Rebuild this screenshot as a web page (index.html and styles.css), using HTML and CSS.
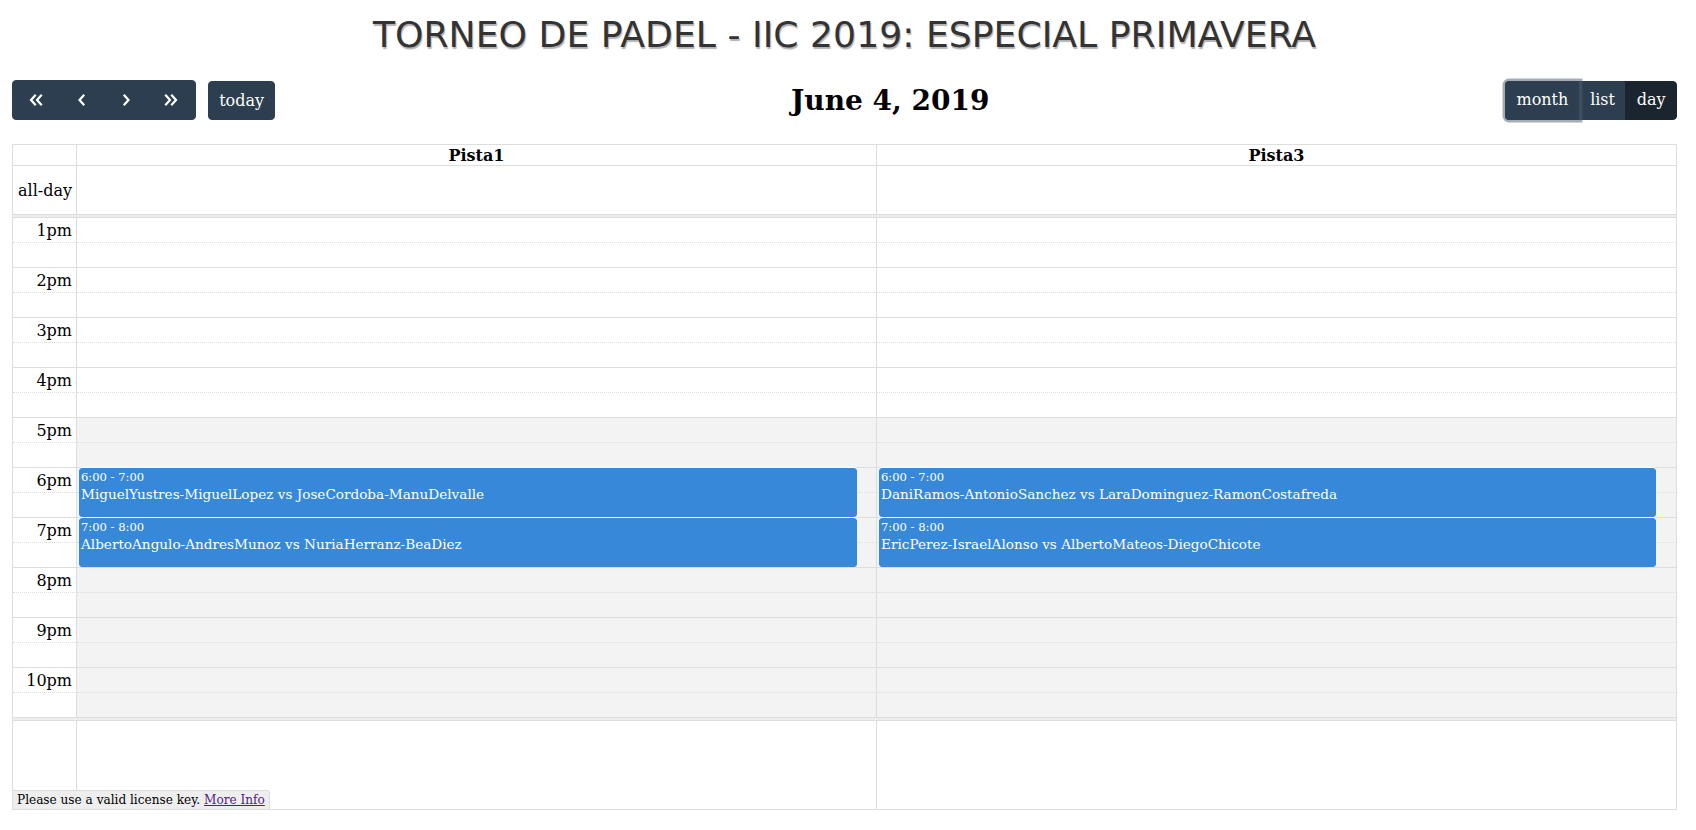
FILE: index.html
```html
<!DOCTYPE html>
<html lang="es">
<head>
<meta charset="utf-8">
<title>Torneo de Padel</title>
<link rel="stylesheet" href="styles.css">
</head>
<body>
<div class="page">
  <h1 class="title">TORNEO DE PADEL - IIC 2019: ESPECIAL PRIMAVERA</h1>

  <div class="toolbar">
    <div class="tb-left">
      <div class="btn-group">
        <button class="btn icon-btn" aria-label="prev year">
          <svg viewBox="0 0 24 24" width="24" height="24"><polyline points="12,7.5 8,12 12,16.5" /><polyline points="18,7.5 14,12 18,16.5" /></svg>
        </button>
        <button class="btn icon-btn" aria-label="prev">
          <svg viewBox="0 0 24 24" width="24" height="24"><polyline points="14.5,7.5 10.5,12 14.5,16.5" /></svg>
        </button>
        <button class="btn icon-btn" aria-label="next">
          <svg viewBox="0 0 24 24" width="24" height="24"><polyline points="9.5,7.5 13.5,12 9.5,16.5" /></svg>
        </button>
        <button class="btn icon-btn" aria-label="next year">
          <svg viewBox="0 0 24 24" width="24" height="24"><polyline points="6,7.5 10,12 6,16.5" /><polyline points="12,7.5 16,12 12,16.5" /></svg>
        </button>
      </div>
      <button class="btn today">today</button>
    </div>
    <h2 class="date">June 4, 2019</h2>
    <div class="btn-group views">
      <button class="btn focus">month</button>
      <button class="btn">list</button>
      <button class="btn active">day</button>
    </div>
  </div>

  <div class="cal">
    <div class="row head">
      <div class="cell axis"></div>
      <div class="cell col">Pista1</div>
      <div class="cell col">Pista3</div>
    </div>
    <div class="row allday">
      <div class="cell axis">all-day</div>
      <div class="cell col"></div>
      <div class="cell col"></div>
    </div>
    <div class="divider"></div>

    <div class="slats">
      <div class="row slot hour"><div class="cell axis">1pm</div><div class="cell col"></div><div class="cell col"></div></div>
      <div class="row slot minor"><div class="cell axis"></div><div class="cell col"></div><div class="cell col"></div></div>
      <div class="row slot hour"><div class="cell axis">2pm</div><div class="cell col"></div><div class="cell col"></div></div>
      <div class="row slot minor"><div class="cell axis"></div><div class="cell col"></div><div class="cell col"></div></div>
      <div class="row slot hour"><div class="cell axis">3pm</div><div class="cell col"></div><div class="cell col"></div></div>
      <div class="row slot minor"><div class="cell axis"></div><div class="cell col"></div><div class="cell col"></div></div>
      <div class="row slot hour"><div class="cell axis">4pm</div><div class="cell col"></div><div class="cell col"></div></div>
      <div class="row slot minor"><div class="cell axis"></div><div class="cell col"></div><div class="cell col"></div></div>
      <div class="row slot hour off"><div class="cell axis">5pm</div><div class="cell col"></div><div class="cell col"></div></div>
      <div class="row slot minor off"><div class="cell axis"></div><div class="cell col"></div><div class="cell col"></div></div>
      <div class="row slot hour off"><div class="cell axis">6pm</div><div class="cell col"></div><div class="cell col"></div></div>
      <div class="row slot minor off"><div class="cell axis"></div><div class="cell col"></div><div class="cell col"></div></div>
      <div class="row slot hour off"><div class="cell axis">7pm</div><div class="cell col"></div><div class="cell col"></div></div>
      <div class="row slot minor off"><div class="cell axis"></div><div class="cell col"></div><div class="cell col"></div></div>
      <div class="row slot hour off"><div class="cell axis">8pm</div><div class="cell col"></div><div class="cell col"></div></div>
      <div class="row slot minor off"><div class="cell axis"></div><div class="cell col"></div><div class="cell col"></div></div>
      <div class="row slot hour off"><div class="cell axis">9pm</div><div class="cell col"></div><div class="cell col"></div></div>
      <div class="row slot minor off"><div class="cell axis"></div><div class="cell col"></div><div class="cell col"></div></div>
      <div class="row slot hour off"><div class="cell axis">10pm</div><div class="cell col"></div><div class="cell col"></div></div>
      <div class="row slot minor off"><div class="cell axis"></div><div class="cell col"></div><div class="cell col"></div></div>

      <div class="events">
        <div class="ev-axis"></div>
        <div class="ev-col">
          <div class="ev" style="top:250px">
            <div class="ev-time">6:00 - 7:00</div>
            <div class="ev-title">MiguelYustres-MiguelLopez vs JoseCordoba-ManuDelvalle</div>
          </div>
          <div class="ev" style="top:300px">
            <div class="ev-time">7:00 - 8:00</div>
            <div class="ev-title">AlbertoAngulo-AndresMunoz vs NuriaHerranz-BeaDiez</div>
          </div>
        </div>
        <div class="ev-col">
          <div class="ev" style="top:250px">
            <div class="ev-time">6:00 - 7:00</div>
            <div class="ev-title">DaniRamos-AntonioSanchez vs LaraDominguez-RamonCostafreda</div>
          </div>
          <div class="ev" style="top:300px">
            <div class="ev-time">7:00 - 8:00</div>
            <div class="ev-title">EricPerez-IsraelAlonso vs AlbertoMateos-DiegoChicote</div>
          </div>
        </div>
      </div>
    </div>

    <div class="divider"></div>
    <div class="row filler">
      <div class="cell axis"></div>
      <div class="cell col"></div>
      <div class="cell col"></div>
    </div>

    <div class="license">Please use a valid license key. <a href="#" class="visited">More Info</a></div>
  </div>
</div>
</body>
</html>
```

FILE: styles.css
```css
* { box-sizing: border-box; }

html, body {
  margin: 0;
  padding: 0;
  background: #fff;
}

body {
  font-family: "DejaVu Serif", serif;
  font-size: 16px;
  color: #000;
}

.page {
  width: 1665px;
  margin-left: 12px;
}

.title {
  margin: 14px 0 0;
  font-family: "DejaVu Sans", sans-serif;
  font-weight: normal;
  font-size: 36.2px;
  line-height: 42px;
  color: #333;
  text-align: center;
  text-shadow: 1px 2px 1px rgba(0, 0, 0, 0.3);
}

/* toolbar */
.toolbar {
  display: flex;
  justify-content: space-between;
  align-items: center;
  margin-top: 24px;
  margin-bottom: 24px;
  height: 40px;
}

.tb-left {
  display: flex;
  align-items: center;
  gap: 12px;
}

.date {
  margin: 2px 0 0;
  font-size: 28px;
  font-weight: bold;
  line-height: 1.2;
}

.btn-group {
  display: flex;
}

.btn {
  font-family: "DejaVu Serif", serif;
  font-size: 16px;
  line-height: 1.5;
  padding: 6.4px 10.4px;
  color: #fff;
  background: #2c3e50;
  border: 1px solid #2c3e50;
  border-radius: 4px;
  margin: 0;
  cursor: pointer;
  position: relative;
}

.btn-group .btn {
  border-radius: 0;
}
.btn-group .btn + .btn {
  margin-left: -1px;
}
.btn-group .btn:first-child {
  border-radius: 4px 0 0 4px;
}
.btn-group .btn:last-child {
  border-radius: 0 4px 4px 0;
}

.icon-btn {
  height: 40px;
  width: 46.7px;
  padding: 0;
  display: flex;
  align-items: center;
  justify-content: center;
}

.icon-btn svg {
  display: block;
  fill: none;
  stroke: #fff;
  stroke-width: 2.2;
  stroke-linecap: square;
  stroke-linejoin: miter;
}

.today {
  height: 39px;
  margin-top: 1px;
}

.views .btn {
  height: 39px;
}

.views .focus {
  z-index: 1;
  border-right-color: #3e4f60;
  box-shadow: 0 0 0 2.5px rgba(76, 91, 106, 0.5);
}

.views .active {
  background: #1a252f;
  border-color: #1a252f;
}

/* calendar */
.cal {
  position: relative;
  border: 1px solid #ddd;
}

.row {
  display: grid;
  grid-template-columns: 64px 800px 1fr;
}

.cell {
  border-right: 1px solid #ddd;
}
.cell:last-child {
  border-right: 0;
}

.axis {
  text-align: right;
  padding: 0 4px;
  white-space: nowrap;
}

.head {
  height: 21px;
  border-bottom: 1px solid #ddd;
}
.head .col {
  text-align: center;
  font-weight: bold;
  line-height: 20px;
  padding-top: 1px;
}

.allday {
  height: 48px;
}
.allday .axis {
  line-height: 48px;
  padding-top: 1px;
}

.divider {
  height: 4px;
  background: #eee;
  border-top: 1px solid #ddd;
  border-bottom: 1px solid #ddd;
}

.slats {
  position: relative;
}

.slot {
  height: 25px;
}
.slot .cell {
  border-top: 1px solid #ddd;
  line-height: 24px;
}
.slot .axis {
  padding-top: 1px;
}
.slot.minor .cell {
  border-top-style: dotted;
}
.slot:first-child {
  height: 24px;
}
.slot:first-child .cell {
  border-top: 0;
}

.slot.off .col {
  background: #f3f3f3;
}

.events {
  position: absolute;
  top: 0;
  left: 0;
  right: 0;
  bottom: 0;
  display: grid;
  grid-template-columns: 64px 800px 1fr;
}

.ev-col {
  position: relative;
  margin: 0 2.5% 0 2px;
}

.ev {
  position: absolute;
  left: 0;
  right: 0;
  height: 49px;
  background: #3788d8;
  border: 1px solid #3788d8;
  border-radius: 3px;
  color: #fff;
  font-size: 13.6px;
  line-height: 1.4;
  padding: 0 1px;
  overflow: hidden;
  box-shadow: 0 -1px 0 #fff;
}

.ev-time {
  font-size: 11.56px;
  white-space: nowrap;
}

.ev-title {
  white-space: nowrap;
}

.filler {
  height: 88px;
}

.license {
  position: absolute;
  left: 0;
  bottom: 0;
  z-index: 5;
  font-size: 12.1px;
  line-height: 14px;
  padding: 2px 4px;
  background: #eee;
  border-style: solid;
  border-color: #ddd;
  border-width: 1px 1px 0 0;
  border-top-right-radius: 3px;
}

.license a.visited {
  color: #551a8b;
}
```
